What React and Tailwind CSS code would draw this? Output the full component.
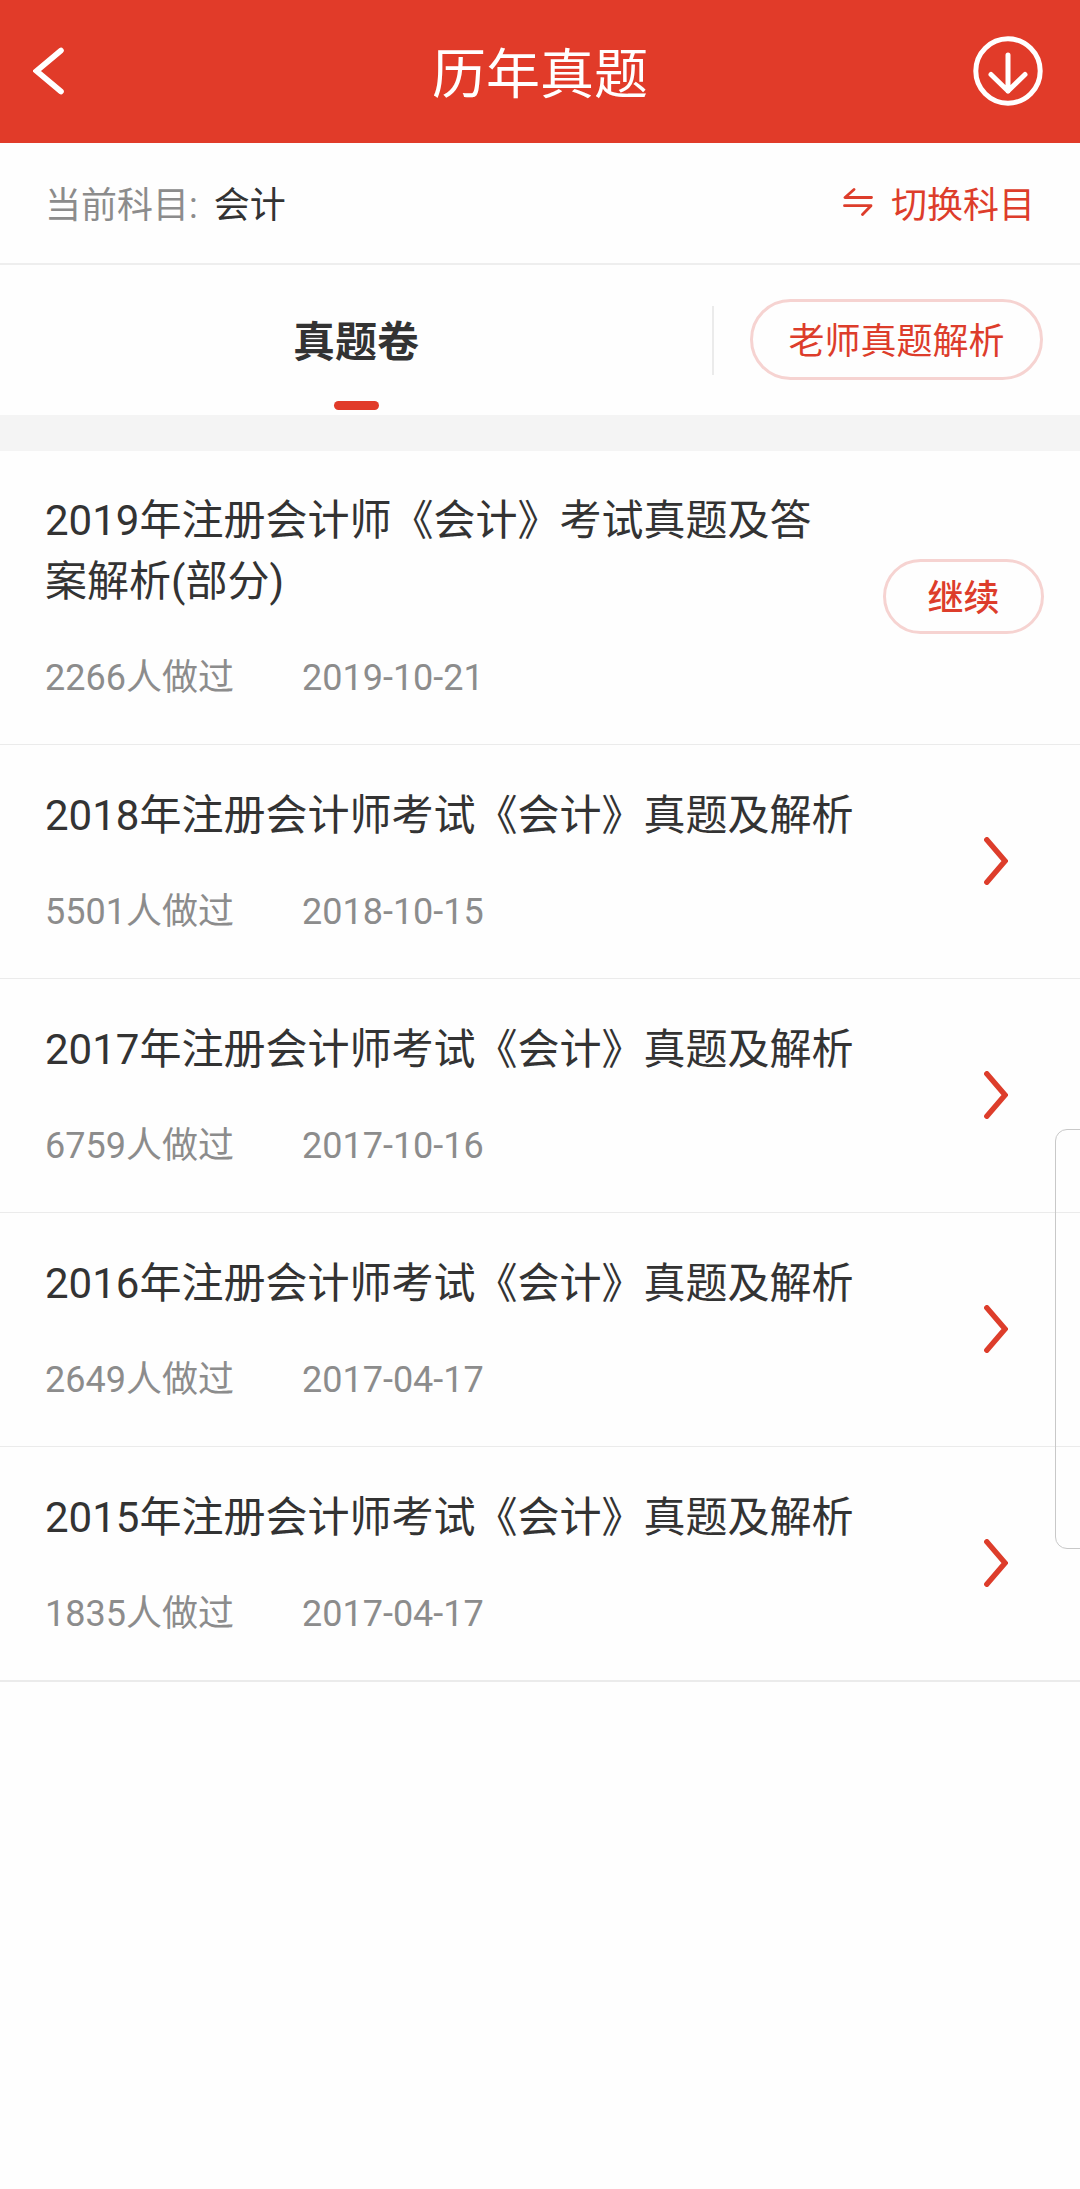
import React, { useState } from 'react';

const papers = [
    { id: 1, title: '2019年注册会计师《会计》考试真题及答案解析(部分)', count: 2266, date: '2019-10-21', inProgress: true },
    { id: 2, title: '2018年注册会计师考试《会计》真题及解析', count: 5501, date: '2018-10-15' },
    { id: 3, title: '2017年注册会计师考试《会计》真题及解析', count: 6759, date: '2017-10-16' },
    { id: 4, title: '2016年注册会计师考试《会计》真题及解析', count: 2649, date: '2017-04-17' },
    { id: 5, title: '2015年注册会计师考试《会计》真题及解析', count: 1835, date: '2017-04-17' },
];

const BackIcon = () => (
    <svg width="32" height="48" viewBox="0 0 32 48" fill="none" stroke="currentColor" strokeWidth="5.6" strokeLinecap="round">
        <path d="M28 3.5 L3.5 24 L28 44.5" />
    </svg>
);

const DownloadIcon = () => (
    <svg width="70" height="70" viewBox="0 0 70 70" fill="none" stroke="currentColor" strokeWidth="5" strokeLinecap="round" strokeLinejoin="round">
        <circle cx="35" cy="35" r="32.2" />
        <path d="M35 19 V55 M18 38.5 L35 55 L52 38.5" />
    </svg>
);

const SwitchIcon = () => (
    <svg width="30" height="30" viewBox="0 0 30 30" fill="none" stroke="currentColor" strokeWidth="2.8" strokeLinecap="round" strokeLinejoin="round">
        <path d="M11 1.5 L2 9.5 H28.5 M1.5 17.7 H28 L19.5 26.5" />
    </svg>
);

const ArrowIcon = () => (
    <svg width="24" height="48" viewBox="0 0 24 48" fill="none" stroke="currentColor" strokeWidth="5.4" strokeLinecap="round">
        <path d="M2.8 2.8 L21 24 L2.8 45.2" />
    </svg>
);

const PaperItem = ({ paper }) => (
    <li className="flex items-center justify-between border-b border-[#ebebeb] pl-[45px] pr-9 last:border-b-2">
        <div className={paper.inProgress ? 'w-[780px] pt-[39px] pb-[40px]' : 'w-[820px] pt-[40px] pb-[40px]'}>
            <h3 className="text-[42px] leading-[61px] text-[#333]">{paper.title}</h3>
            <p className="mt-[40px] flex text-[36px] leading-[52px] text-[#8c8c8c]">
                <span className="w-[257px]">{paper.count}人做过</span>
                <span>{paper.date}</span>
            </p>
        </div>
        {paper.inProgress ? (
            <button className="mb-[2px] h-[75px] w-[161px] rounded-full border-[3px] border-[#f6d3d1] pt-[5px] text-[36px] leading-[64px] font-medium text-[#dd3d2b]">
                继续
            </button>
        ) : (
            <button className="mr-9 mb-[2px] text-[#dd3d2b]">
                <ArrowIcon />
            </button>
        )}
    </li>
);

const App = () => {
    const [subject] = useState('会计');

    return (
        <div className="relative h-[2189px] w-[1080px] overflow-hidden bg-[#fefefe] font-[Roboto,'Noto_Sans_CJK_SC',sans-serif]">
            <header className="flex h-[143px] items-center justify-between bg-[#e13b29] pr-[37px] pb-[2px] pl-[33px] text-white">
                <button className="w-[74px]"><BackIcon /></button>
                <h1 className="pt-[10px] text-[54px] leading-[78px]">历年真题</h1>
                <button><DownloadIcon /></button>
            </header>

            <div className="flex h-[122px] items-center justify-between border-b-2 border-[#eee] px-[45px] text-[36px]">
                <p className="pt-[6px] text-[#8c8c8c]">
                    当前科目:<span className="ml-4 text-[#333]">{subject}</span>
                </p>
                <button className="flex items-center gap-[18px] text-[#dd3d2b]">
                    <SwitchIcon />
                    <span className="pt-[6px]">切换科目</span>
                </button>
            </div>

            <div className="flex h-[150px] items-center">
                <div className="flex h-full w-[712px] flex-col items-center justify-between pt-[47px] pb-[5px]">
                    <span className="text-[42px] leading-[61px] font-bold text-[#333]">真题卷</span>
                    <span className="h-[9px] w-[45px] rounded-full bg-[#e13b29]" />
                </div>
                <div className="h-[69px] w-[2px] bg-[#ebebeb]" />
                <button className="mb-[2px] ml-[36px] h-[81px] w-[293px] rounded-full border-[3px] border-[#f6d3d1] pt-[6px] text-[36px] text-[#dd3d2b]">
                    老师真题解析
                </button>
            </div>

            <div className="h-9 bg-[#f4f4f4]" />

            <ul>
                {papers.map((paper) => (
                    <PaperItem key={paper.id} paper={paper} />
                ))}
            </ul>

            {/* collapsed side drawer */}
            <div className="absolute top-[1129px] -right-4 h-[420px] w-[41px] rounded-xl border border-[#c8c8c8]" />
        </div>
    );
};

export default App;
